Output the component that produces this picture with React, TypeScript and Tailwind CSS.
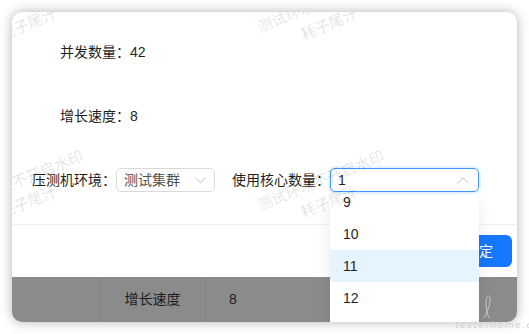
import React from 'react';

// Watermark blocks: centre points inside the window
const marks = [
  { x: 12, y: 1 },
  { x: 313, y: 1 },
  { x: 12, y: 179 },
  { x: 313, y: 179 },
];

const options = ['9', '10', '11', '12', '13'];

const ChevronDown: React.FC = () => (
  <svg width="11" height="7" viewBox="0 0 11 7" fill="none">
    <path d="M0.5 0.8 L5.5 5.8 L10.5 0.8" stroke="#bfbfbf" strokeWidth="1" />
  </svg>
);

const ChevronUp: React.FC = () => (
  <svg width="12" height="7" viewBox="0 0 12 7" fill="none">
    <path d="M0.5 6.2 L6 0.8 L11.5 6.2" stroke="#bfbfbf" strokeWidth="1" />
  </svg>
);

const App: React.FC = () => {
  return (
    <div
      className="relative w-[529px] h-[334px] bg-white overflow-hidden"
      style={{ fontFamily: '"Liberation Sans", "Noto Sans CJK SC", sans-serif' }}
    >
      <div className="absolute left-[12px] top-[12px] w-[505px] h-[310px] rounded-[10px] overflow-hidden bg-white shadow-[0_0_12px_rgba(0,0,0,0.3)] flex flex-col">
        {/* modal body */}
        <div className="h-[265px] flex flex-col pt-[28px] text-[14px] text-[#1f1f1f]">
          <div className="h-[24px] flex items-center pl-[48px]">并发数量：42</div>
          <div className="h-[24px] flex items-center pl-[48px] mt-[40px]">增长速度：8</div>
          <div className="h-[24px] flex items-center pl-[20px] mt-[40px]">
            <span>压测机环境：</span>
            <div className="w-[99px] h-[24px] rounded-[5px] border border-[#d9d9d9] flex items-center justify-between pl-[7px] pr-[8px]">
              <span className="text-[#505050]">测试集群</span>
              <ChevronDown />
            </div>
            <span className="ml-[17px]">使用核心数量：</span>
            <div className="w-[149px] h-[24px] rounded-[5px] border border-[#4096ff] shadow-[0_0_0_2px_rgba(5,145,255,0.1)] flex items-center justify-between pl-[7px] pr-[9px]">
              <span>1</span>
              <ChevronUp />
            </div>
          </div>
          <div className="mt-[32px] h-px bg-[#f0f0f0]" />
          <div className="flex justify-end pt-[10px] pr-[5px]">
            <button className="h-[32px] px-[15px] rounded-[6px] bg-[#1677ff] text-white text-[14px] tracking-[4px]">
              确定
            </button>
          </div>
        </div>

        {/* page behind overlay */}
        <div className="flex-1 bg-[#8b8b8b] flex text-[14px] text-[#1c1c1c]">
          <div className="w-[88px] border-r border-[#828282]" />
          <div className="w-[106px] border-r border-[#828282] flex items-center justify-center">增长速度</div>
          <div className="flex-1 flex items-center pl-[23px]">8</div>
        </div>

        {/* select dropdown */}
        <div className="absolute left-[318px] top-[183px] w-[149px] h-[150px] bg-white rounded-[8px] shadow-[0_6px_16px_rgba(0,0,0,0.08),0_3px_6px_-4px_rgba(0,0,0,0.12)] overflow-hidden">
          <div className="-mt-[9px]">
            {options.map((o) => (
              <div
                key={o}
                className={`h-[32px] flex items-center pl-[13px] text-[14px] text-[#1f1f1f] ${o === '11' ? 'bg-[#e6f4ff]' : ''}`}
              >
                {o}
              </div>
            ))}
          </div>
        </div>

        {/* watermark */}
        {marks.map((m, i) => (
          <div
            key={i}
            className="absolute pointer-events-none -translate-x-1/2 -translate-y-1/2 rotate-[-22deg] text-center whitespace-nowrap text-[15px] leading-[23px] text-[rgba(0,0,0,0.12)]"
            style={{ left: m.x, top: m.y }}
          >
            <div>测试环境不开启水印</div>
            <div>耗子尾汁</div>
          </div>
        ))}
      </div>

      {/* site watermark */}
      <svg className="absolute left-[480px] top-[294px]" width="16" height="26" viewBox="0 0 16 26" fill="none">
        <path d="M4 24 C7 18 11 10 10 4 C9 0 6 2 6 8 C6 14 7 20 9 24" stroke="#d4d4d4" strokeWidth="0.8" />
      </svg>
      <div className="absolute left-[455px] top-[320px] text-[9px] leading-[10px] tracking-[1.5px] text-[#cfcfcf] italic" style={{ fontFamily: '"DejaVu Sans", sans-serif' }}>
        testerhome.com
      </div>
    </div>
  );
};

export default App;
